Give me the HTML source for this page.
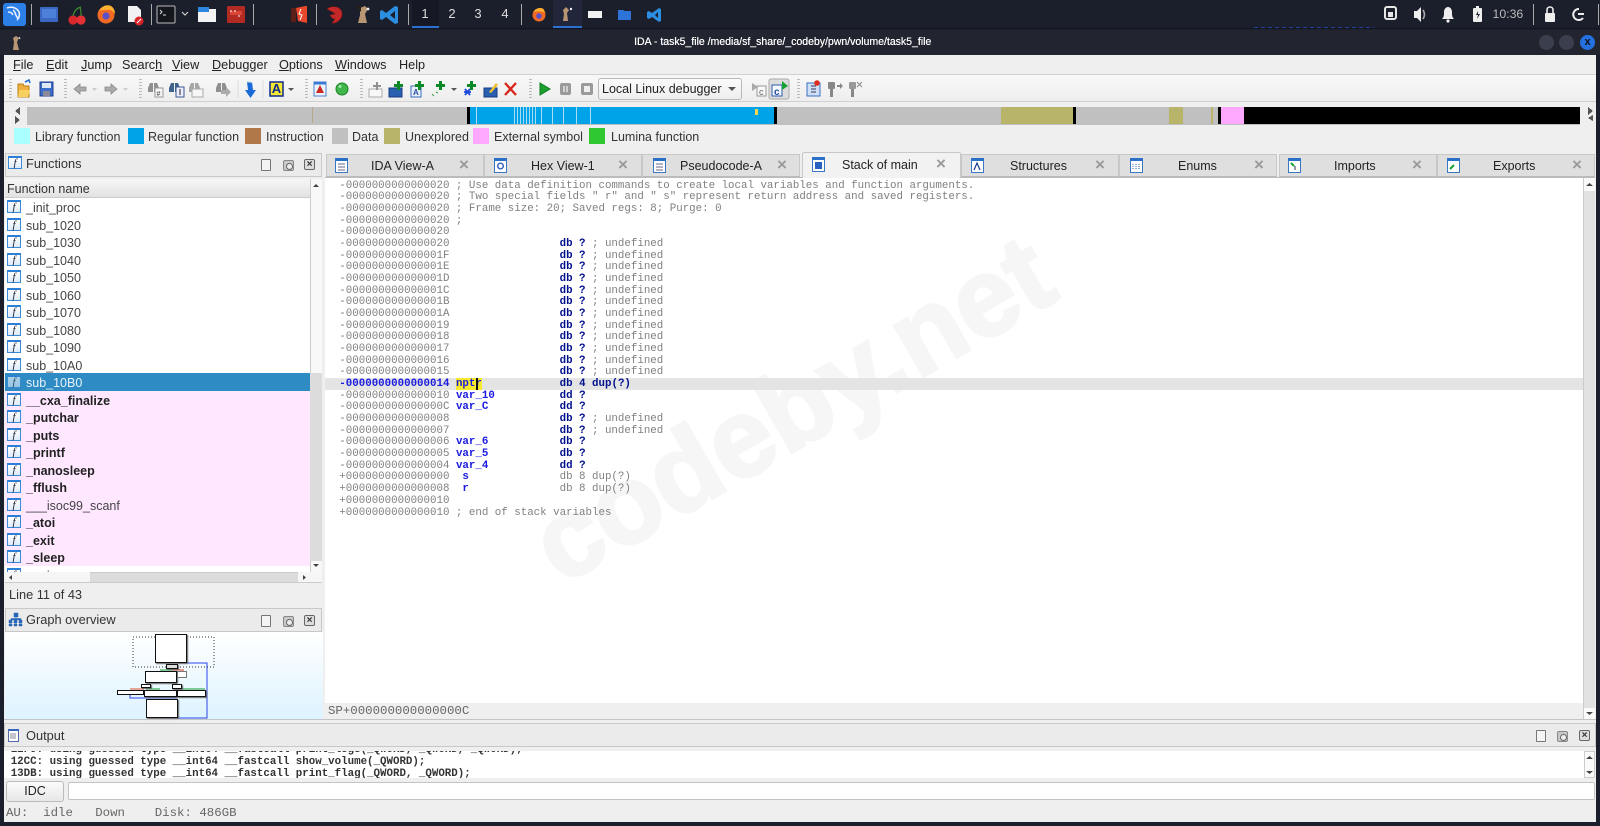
<!DOCTYPE html>
<html><head><meta charset="utf-8"><title>IDA</title>
<style>
html,body{margin:0;padding:0;width:1600px;height:826px;overflow:hidden;background:#1b1e2b}
body{position:relative;font-family:"Liberation Sans",sans-serif;font-size:12.5px;color:#333}
.a{position:absolute}
.t{position:absolute;white-space:pre;line-height:16px}
svg{position:absolute;overflow:visible}
.sep{position:absolute;width:1px;background:#aaa;top:4px;height:21px}
.ws{position:absolute;top:6px;color:#ddd;font-size:13px;width:20px;text-align:center}
.sw{position:absolute;top:128px;width:16px;height:16px}
.m{position:absolute;top:57px;font-size:12.7px;line-height:16px;white-space:pre;color:#222}
.m u{text-decoration-thickness:1px}
.l{position:absolute;top:129px;font-size:12.5px;line-height:16px;white-space:pre;color:#333}
.fi{position:absolute;left:2px;top:2px;width:12px;height:10px;border:1px solid #3a8ad8;border-top:2px solid #2c7fd8;background:linear-gradient(#fff,#dcebfa);font:italic 11px/11px "Liberation Serif",serif;color:#223;text-align:center}
.r{position:relative;height:17.5px;line-height:21px;padding-left:21px;white-space:pre;color:#444;font-size:12.5px}
.p{background:#ffe8ff;color:#222;font-weight:bold}
.n{font-weight:normal;color:#444}
.s{background:#2e8bc4;color:#e8f2fa}
.s .fi{opacity:.6}
.tab{position:absolute;top:154px;height:23px;width:158px;background:#dfdfdf;border:1px solid #c8c8c8;border-bottom:1px solid #bbb;box-sizing:border-box}
.tt{position:absolute;top:158px;font-size:12.5px;line-height:16px;color:#222;white-space:pre}
.x{position:absolute;top:157px;font:bold 17px/16px "Liberation Sans",sans-serif;color:#999;width:12px;text-align:center}
pre{margin:0;font-family:"Liberation Mono",monospace;font-size:10.8px;line-height:11.67px;color:#808080}
pre b{color:#00108c}
pre i{font-style:normal;font-weight:bold;color:#1a1ae0}
pre em{font-style:normal;font-weight:bold;color:#1a1ae0}
.stat{position:absolute;font-family:"Liberation Mono",monospace;font-size:12.4px;line-height:15px;color:#666;white-space:pre}
.hb{position:absolute;width:10px;height:12px;border:1px solid #777;border-radius:1px;background:#f4f4f4;box-sizing:border-box}
.hb2{position:absolute;width:11px;height:11px;border:1px solid #888;border-radius:2px;background:#c8c8c8;box-sizing:border-box}
.hb2:after{content:"";position:absolute;left:1.5px;top:1.5px;width:5px;height:5px;border:1px solid #666;border-radius:50%;background:#eee}
.hx{position:absolute;width:11px;height:11px;border:1px solid #666;border-radius:2px;box-sizing:border-box;font:bold 10px/9px "Liberation Sans",sans-serif;text-align:center;color:#333;background:#ddd}
.tb{position:absolute;width:13px;height:15px;background:#fff;border:1px solid #3b78c4;border-top:3px solid #2a70c8;box-sizing:border-box}
.g{position:absolute;background:#fff;border:1px solid #111;box-shadow:1px 1px 1px #666;box-sizing:border-box}
.grip{position:absolute;top:79px;height:20px;width:3px;background:repeating-linear-gradient(#bbb 0 1px,transparent 1px 3px)}
</style></head><body>

<!-- top panel -->
<div class="a" style="left:0;top:0;width:1600px;height:30px;background:#1b1e2b"></div>
<div class="a" style="left:0;top:28px;width:1600px;height:1px;background:#141722"></div>
<div class="a" style="left:1254px;top:27px;width:120px;height:1px;background:repeating-linear-gradient(90deg,#1f3f9a 0 4px,transparent 4px 7px)"></div>
<svg style="left:0;top:0" width="1600" height="30">
 <rect x="3" y="3" width="23" height="23" rx="3" fill="#2b7fe6"/>
 <path d="M7 8c5-2 10 0 12 4 1 3 0 6-2 8m-4-10c3 2 2 6 5 8M8 12c3 0 4 1 5 3" stroke="#e6f0ff" stroke-width="1.6" fill="none"/>
 <rect x="40" y="7" width="18" height="15" rx="1" fill="#3c68c4"/>
 <rect x="42" y="9" width="14" height="9" fill="#4d80d8"/>
 <circle cx="73" cy="20" r="4.6" fill="#d9282b"/><circle cx="81" cy="20" r="4.6" fill="#e23034"/>
 <path d="M73 16c1-5 4-8 8-9M81 16c0-4 0-7-1-9" stroke="#3d8a2e" stroke-width="1.2" fill="none"/>
 <circle cx="106" cy="15" r="8.5" fill="#f06a23"/><circle cx="106" cy="16" r="3.6" fill="#5a50c8"/><path d="M99 11c2-5 8-7 12-5 3 2 4 5 4 8-2-3-5-5-8-4-3 0-6 0-8 1z" fill="#ffb02e"/>
 <path d="M128 6h9l4 4v12h-13z" fill="#f2f2f2"/><circle cx="139" cy="21" r="4.5" fill="#d8262b"/><path d="M137 23l4-4" stroke="#fff"/>
 <rect x="157" y="6" width="18" height="17" rx="1" fill="#15171f" stroke="#bcbcbc"/><path d="M160 10l2 2-2 2" stroke="#ddd" fill="none"/><path d="M163 15h3" stroke="#ddd"/>
 <path d="M182 12l3 3 3-3" stroke="#ccc" fill="none" stroke-width="1.2"/>
 <path d="M198 7h7l2 2h9v13h-18z" fill="#f3f3f3"/><rect x="198" y="7" width="11" height="5" fill="#2f86e0"/>
 <rect x="227" y="6" width="18" height="17" rx="1" fill="#b22a22"/><path d="M230 11h12v4h-12z" fill="#d8463a"/><path d="M231 10v2m4-2v2m4 3v2" stroke="#fff"/>
 <path d="M296 8l9-2 2 0v17l-9-2z" fill="#e8472c"/><path d="M291 8h5v14h-5z" fill="#5b1f18"/><path d="M301 9l-2 5 3 1-2 5" stroke="#fff" fill="none"/>
 <path d="M327 9c5-4 14-3 15 4 1 6-6 11-10 10l3-4c-3 0-4-2-5-4l5-1c-2-2-5-3-8-5z" fill="#c42828" stroke="#751818" stroke-width=".6"/>
 <path d="M360 8l5-2 3 3-3 5 2 9h-9l2-8z" fill="#b89674"/><circle cx="368" cy="9" r="1.4" fill="#eee"/><path d="M357 7l4-2 0 7z" fill="#2a2018"/>
 <path d="M395 6l-9 7-4-3-2 1v8l2 1 4-3 9 7 3-1V7zm0 5v8l-5-4z" fill="#2b8ee0"/>
 <rect x="412" y="0" width="27" height="27" fill="#161825"/><rect x="412" y="26" width="27" height="2" fill="#2b6fd0"/>
 <rect x="553" y="0" width="29" height="27" fill="#22263a"/><rect x="553" y="26" width="29" height="2" fill="#2b6fd0"/>
 <circle cx="539" cy="15" r="6.5" fill="#f06a23"/><circle cx="539" cy="16" r="2.8" fill="#5a50c8"/><path d="M533.500 12c2-4 7-5 10-3l2 4c-3-2-8-2-12-1z" fill="#ffb02e"/>
 <path d="M563 10l3-3 3 3-2 3 1 8h-5l1-7z" fill="#b89674"/><circle cx="571" cy="9" r="1.2" fill="#eee"/>
 <rect x="588" y="11" width="14" height="7" fill="#f2f2f2"/>
 <path d="M618 10h5l2 1h6v9h-13z" fill="#2e74d8"/>
 <path d="M659 8l-7 5-3-2-2 1v6l2 1 3-2 7 5 2-1V9zm-1 4v6l-3-3z" fill="#2b8ee0"/>
 <rect x="1385" y="7" width="11" height="12" rx="2" fill="none" stroke="#e6e6e6" stroke-width="2"/><rect x="1388" y="12" width="5" height="5" fill="#e6e6e6"/>
 <path d="M1414 11h3l4-4v15l-4-4h-3z" fill="#eee"/><path d="M1423 10c2 3 2 6 0 9" stroke="#aaa" stroke-width="1.6" fill="none"/>
 <path d="M1442 19c2-2 2-4 2-7 0-3 2-5 4-5s4 2 4 5c0 3 0 5 2 7z" fill="#eee"/><circle cx="1448" cy="21" r="1.6" fill="#eee"/>
 <rect x="1473" y="8" width="9" height="14" rx="1" fill="#eee"/><rect x="1476" y="6" width="3" height="2" fill="#eee"/><path d="M1478 11l-2 4h2l-1 4 3-5h-2z" fill="#1b1e2b"/>
 <path d="M1547 13v-3c0-4 6-4 6 0v3" stroke="#eee" stroke-width="1.6" fill="none"/><rect x="1545" y="13" width="10" height="9" rx="1" fill="#eee"/>
 <path d="M1579 9a5.5 5.5 0 1 0 4 9" stroke="#eee" stroke-width="2" fill="none"/><path d="M1578 14h6" stroke="#eee" stroke-width="2"/>
</svg>
<div class="sep" style="left:31px"></div><div class="sep" style="left:151px"></div><div class="sep" style="left:253px"></div><div class="sep" style="left:316px"></div><div class="sep" style="left:408px"></div><div class="sep" style="left:521px"></div><div class="sep" style="left:1533px"></div><div class="sep" style="left:1598px"></div>
<div class="ws" style="left:415px">1</div><div class="ws" style="left:442px">2</div><div class="ws" style="left:468px">3</div><div class="ws" style="left:495px">4</div>
<div class="t" style="left:1492.500px;top:6px;color:#bbb;font-size:12.3px">10:36</div>

<!-- window -->
<div class="a" style="left:0;top:30px;width:1600px;height:25px;background:#22252f"></div>
<svg style="left:8px;top:34px" width="16" height="18"><path d="M5 4l3-2 3 2-2 4 2 8H5l1-8z" fill="#b89674"/><path d="M11 3l1 2" stroke="#eee"/></svg>
<div class="t" style="left:634px;top:34px;color:#fff;font-size:11px;transform:scaleX(.955);transform-origin:left top;text-shadow:.2px 0 0 #fff">IDA - task5_file /media/sf_share/_codeby/pwn/volume/task5_file</div>
<div class="a" style="left:1539px;top:35px;width:15px;height:15px;border-radius:50%;background:#3b3f4d"></div>
<div class="a" style="left:1559px;top:35px;width:15px;height:15px;border-radius:50%;background:#3b3f4d"></div>
<div class="a" style="left:1580px;top:35px;width:15px;height:15px;border-radius:50%;background:#2470e0;color:#111;font:bold 11px/15px 'Liberation Sans';text-align:center">x</div>

<div class="a" style="left:4px;top:55px;width:1592px;height:767px;background:#efefef"></div>

<!-- menu -->
<div class="a" style="left:4px;top:74px;width:1592px;height:1px;background:#d2d2d2"></div>
<div class="m" style="left:13px"><u>F</u>ile</div><div class="m" style="left:46px"><u>E</u>dit</div><div class="m" style="left:81px"><u>J</u>ump</div><div class="m" style="left:122px">Searc<u>h</u></div><div class="m" style="left:172px"><u>V</u>iew</div><div class="m" style="left:212px"><u>D</u>ebugger</div><div class="m" style="left:279px"><u>O</u>ptions</div><div class="m" style="left:335px"><u>W</u>indows</div><div class="m" style="left:399px">Help</div>

<!-- toolbar -->
<div class="a" style="left:4px;top:75px;width:1592px;height:27px;background:linear-gradient(#f8f8f8,#eeeeee);border-bottom:1px solid #d0d0d0;box-sizing:border-box"></div>
<div class="grip" style="left:9px"></div><div class="grip" style="left:64px"></div><div class="grip" style="left:139px"></div><div class="grip" style="left:305px"></div><div class="grip" style="left:360px"></div><div class="grip" style="left:529px"></div><div class="grip" style="left:797px"></div>
<svg style="left:0;top:0" width="900" height="105">
 <path d="M18 84h5l1 2h5v11H18z" fill="#f0b040" stroke="#b8801c"/><path d="M19 90h11l-2 7H18z" fill="#f8d060"/><path d="M25 82l4-2 1 3" stroke="#2a70c8" stroke-width="1.6" fill="none"/>
 <rect x="40" y="82" width="13" height="14" fill="#3a6cc8" stroke="#223f90"/><rect x="42" y="83" width="9" height="5" fill="#dfe8f8"/><rect x="43" y="91" width="7" height="5" fill="#889"/>
 <path d="M74 89l6-5v3h6v4h-6v3z" fill="#aaa" stroke="#888" stroke-width=".8"/><path d="M92 88l2.500 3 2.500-3z" fill="#ccc"/>
 <path d="M117 89l-6-5v3h-6v4h6v3z" fill="#aaa" stroke="#888" stroke-width=".8"/><path d="M123 88l2.500 3 2.500-3z" fill="#ccc"/>
 <path d="M150 83h3v9h-5v-4zM154 83h3l2 5v4h-5z" fill="#8f8f8f"/><rect x="155" y="88" width="8" height="9" fill="#f6f6f6" stroke="#999"/><text x="156.500" y="96" font-size="7" fill="#444" font-family="Liberation Sans">#</text>
 <path d="M171 83h3v9h-5v-4zM175 83h3l2 5v4h-5z" fill="#3f628c"/><rect x="176" y="87" width="8" height="10" fill="#eef" stroke="#3a5a90"/><path d="M180 89v6" stroke="#223"/>
 <path d="M191 83h3v9h-5v-4zM195 83h3l2 5v4h-5z" fill="#a6a6a6"/><rect x="192" y="89" width="11" height="8" fill="#f6f6f6" stroke="#aaa"/>
 <path d="M218 83h3v9h-5v-4zM222 83h3l2 5v3h-5z" fill="#8f8f8f"/><path d="M221 90h5v-3l5 5-5 5v-3h-5z" fill="#aaa"/>
 <path d="M238 80v18" stroke="#ddd"/>
 <path d="M247 82h5l1 8h3l-5.500 8-5.500-8h3z" fill="#1b6ad8"/><path d="M247 82c2 0 4 0 5 1" stroke="#9cd" fill="none"/>
 <path d="M263 80v18" stroke="#ddd"/>
 <rect x="270" y="82" width="13" height="14" fill="#f6e634" stroke="#102a8c" stroke-width="1.500"/>
 <path d="M288 88l3 3 3-3z" fill="#555"/>
 <rect x="314" y="82" width="12" height="14" fill="#eef4fc" stroke="#4a80c8"/><rect x="314" y="82" width="12" height="2.500" fill="#3a7ad8"/><path d="M320 85l4 8h-8z" fill="#c82820"/>
 <circle cx="342" cy="89" r="6" fill="#3fb54a" stroke="#1c8428"/><circle cx="340" cy="86.500" r="1.500" fill="#a6e8a6"/>
 <rect x="369" y="89" width="13" height="8" fill="#f8f8f8" stroke="#aaa"/><path d="M376 82h2v3h3v2h-3v3h-2v-3h-3v-2h3z" fill="#909090"/>
 <rect x="389" y="88" width="13" height="9" fill="#2a60b0" stroke="#1a3a80"/><path d="M397 81h3v3h3v3h-3v3h-3v-3h-3v-3h3z" fill="#0d8a28"/>
 <rect x="411" y="86" width="10" height="11" fill="#e8f0fa" stroke="#3a6ab8"/><text x="413" y="95" font-size="8" font-weight="bold" fill="#2a50a0" font-family="Liberation Sans">A</text><path d="M418 81h3v3h3v3h-3v3h-3v-3h-3v-3h3z" fill="#0d8a28"/>
 <path d="M432 94l2 2m2-4 2 1" stroke="#3aa04a"/><path d="M439 81h3v3h3v3h-3v3h-3v-3h-3v-3h3z" fill="#0d8a28"/><path d="M451 88l3 3 3-3z" fill="#555"/>
 <path d="M465 89l5 6m0-6l-5 6m-1-3h7" stroke="#1e4adc" stroke-width="1.800"/><path d="M470 81h3v3h3v3h-3v3h-3v-3h-3v-3h3z" fill="#0d8a28"/>
 <rect x="484" y="88" width="13" height="9" fill="#2a60b0" stroke="#1a3a80"/><path d="M489 92l7-9 2 2-7 8z" fill="#f0c030"/>
 <path d="M505 83l11 12m0-12l-11 12" stroke="#d8261c" stroke-width="2.400"/>
 <path d="M540 83l10 6-10 6z" fill="#1da030" stroke="#0c7a1c"/>
 <rect x="560" y="83" width="11" height="12" rx="2" fill="#9a9a9a"/><path d="M564 86v6m3-6v6" stroke="#eee" stroke-width="1.300"/>
 <rect x="581" y="83" width="12" height="12" rx="2" fill="#9a9a9a"/><rect x="584" y="86" width="6" height="6" fill="#eee"/>
 <path d="M752 83l6 4-6 4zM758 85h8" fill="#aaa"/><rect x="757" y="86" width="9" height="10" fill="#f8f8f8" stroke="#999"/><text x="759" y="95" font-size="9" font-family="Liberation Sans" fill="#666">c</text>
 <rect x="769" y="79" width="20" height="20" rx="2" fill="#ddd" stroke="#aaa"/><rect x="772" y="85" width="10" height="11" fill="#f4f8ff" stroke="#2a5aa8"/><text x="774" y="95" font-size="10" font-weight="bold" font-family="Liberation Sans" fill="#224a9a">c</text><path d="M782 81l6 5-6 4z" fill="#18a030"/>
 <rect x="807" y="83" width="13" height="13" fill="#cfe0f6" stroke="#3a70c0"/><path d="M811 86h5m-5 3h5m-5 3h5" stroke="#335"/><circle cx="817" cy="83" r="2.800" fill="#e02a20"/>
 <rect x="828" y="82" width="7" height="7" rx="1" fill="#888"/><rect x="830" y="89" width="3" height="8" fill="#888"/><path d="M837 85h3v-2l3 3-3 3v-2h-3z" fill="#888"/>
 <rect x="849" y="82" width="7" height="7" rx="1" fill="#999"/><rect x="851" y="89" width="3" height="8" fill="#888"/><path d="M857 82l5 5m0-5l-5 5" stroke="#888"/>
</svg>
<div class="a" style="left:598px;top:78px;width:144px;height:22px;background:linear-gradient(#fbfbfb,#eee);border:1px solid #b8b8b8;border-radius:3px;box-sizing:border-box"></div>
<div class="t" style="left:602px;top:81px;font-size:12.5px;color:#222">Local Linux debugger</div>
<svg style="left:728px;top:87px" width="8" height="5"><path d="M0 0h8l-4 4z" fill="#555"/></svg>
<div class="a" style="left:270px;top:81px;width:13px;text-align:center;font:bold 13px/16px 'Liberation Sans';color:#102a8c">A</div>

<!-- nav band -->
<div class="a" style="left:4px;top:102px;width:1592px;height:48px;background:#efefef"></div>
<svg style="left:0;top:102px" width="1600" height="24" shape-rendering="crispEdges">
 <path d="M15 9l5-4v8zM15 14l5 4-5 4z" fill="#555"/>
 <rect x="27" y="5" width="1553" height="18" fill="#c0c0c0"/>
 <rect x="312" y="5" width="1" height="16" fill="#b8a890"/>
 <rect x="467" y="5" width="3" height="17" fill="#000"/>
 <rect x="470" y="5" width="304" height="17" fill="#00a2e8"/>
 <g fill="#a8dcf4"><rect x="476" y="5" width="1" height="17"/><rect x="514" y="5" width="1" height="17"/><rect x="517" y="5" width="1" height="17"/><rect x="520" y="5" width="1" height="17"/><rect x="523" y="5" width="1" height="17"/><rect x="526" y="5" width="1" height="17"/><rect x="529" y="5" width="1" height="17"/><rect x="532" y="5" width="1" height="17"/><rect x="535" y="5" width="1" height="17"/><rect x="541" y="5" width="1" height="17"/><rect x="552" y="5" width="1" height="17"/><rect x="563" y="5" width="1" height="17"/><rect x="576" y="5" width="1" height="17"/><rect x="590" y="5" width="1" height="17"/></g>
 <rect x="755" y="7" width="3" height="6" fill="#f4d64e"/>
 <rect x="774" y="5" width="3" height="17" fill="#000"/>
 <rect x="1001" y="5" width="72" height="17" fill="#b8b46a"/>
 <rect x="1073" y="5" width="3" height="17" fill="#000"/>
 <rect x="1169" y="5" width="14" height="17" fill="#b8b46a"/>
 <rect x="1211" y="5" width="2" height="17" fill="#b8b46a"/>
 <rect x="1218" y="5" width="3" height="17" fill="#000"/>
 <rect x="1221" y="5" width="23" height="17" fill="#ffa8ff"/>
 <rect x="1244" y="5" width="336" height="17" fill="#000"/>
 <path d="M1588 5l5 4-5 4zM1593 13v6l-5-3z" fill="#555"/>
</svg>

<!-- legend -->
<div class="sw" style="left:14px;background:#aaffff"></div><div class="l" style="left:35px">Library function</div>
<div class="sw" style="left:128px;background:#00a2e8"></div><div class="l" style="left:148px">Regular function</div>
<div class="sw" style="left:245px;background:#b07848"></div><div class="l" style="left:266px">Instruction</div>
<div class="sw" style="left:332px;background:#c0c0c0"></div><div class="l" style="left:352px">Data</div>
<div class="sw" style="left:384px;background:#b8b46a"></div><div class="l" style="left:405px">Unexplored</div>
<div class="sw" style="left:473px;background:#ffa8ff"></div><div class="l" style="left:494px">External symbol</div>
<div class="sw" style="left:589px;background:#30c830"></div><div class="l" style="left:611px">Lumina function</div>

<!-- functions panel -->
<div class="a" style="left:5px;top:153px;width:317px;height:24px;background:#ebebeb;border:1px solid #c8c8c8;box-sizing:border-box"></div>
<div class="a" style="left:5px;top:155px;width:16px;height:16px"><span class="fi" style="left:3px;top:1px">f</span></div>
<div class="t" style="left:26px;top:156px;font-size:12.8px;color:#333">Functions</div>
<div class="hb" style="left:261px;top:159px"></div><div class="hb2" style="left:283px;top:160px"></div><div class="hx" style="left:304px;top:159px">×</div>

<div class="a" style="left:5px;top:179px;width:305px;height:19px;background:linear-gradient(#f6f6f6,#e2e2e2);border-bottom:1px solid #ccc;box-sizing:border-box"></div>
<div class="t" style="left:7px;top:181px;font-size:12.5px;color:#333">Function name</div>
<div class="a" style="left:5px;top:198px;width:305px;height:374px;background:#fff;overflow:hidden">
<div class="r"><span class="fi">f</span>_init_proc</div>
<div class="r"><span class="fi">f</span>sub_1020</div>
<div class="r"><span class="fi">f</span>sub_1030</div>
<div class="r"><span class="fi">f</span>sub_1040</div>
<div class="r"><span class="fi">f</span>sub_1050</div>
<div class="r"><span class="fi">f</span>sub_1060</div>
<div class="r"><span class="fi">f</span>sub_1070</div>
<div class="r"><span class="fi">f</span>sub_1080</div>
<div class="r"><span class="fi">f</span>sub_1090</div>
<div class="r"><span class="fi">f</span>sub_10A0</div>
<div class="r s"><span class="fi">f</span>sub_10B0</div>
<div class="r p"><span class="fi">f</span>__cxa_finalize</div>
<div class="r p"><span class="fi">f</span>_putchar</div>
<div class="r p"><span class="fi">f</span>_puts</div>
<div class="r p"><span class="fi">f</span>_printf</div>
<div class="r p"><span class="fi">f</span>_nanosleep</div>
<div class="r p"><span class="fi">f</span>_fflush</div>
<div class="r p n"><span class="fi">f</span>___isoc99_scanf</div>
<div class="r p"><span class="fi">f</span>_atoi</div>
<div class="r p"><span class="fi">f</span>_exit</div>
<div class="r p"><span class="fi">f</span>_sleep</div>
<div class="r"><span class="fi">f</span>.main</div>
</div>
<!-- vert scrollbar -->
<div class="a" style="left:310px;top:179px;width:12px;height:393px;background:#f8f8f8;border-left:1px solid #ccc;box-sizing:border-box"></div>
<div class="a" style="left:310px;top:373px;width:12px;height:188px;background:#dcdcdc"></div>
<svg style="left:310px;top:179px" width="12" height="393"><path d="M3 8l3-3 3 3z" fill="#444"/><path d="M3 385l3 3 3-3z" fill="#444"/></svg>
<!-- hor scrollbar -->
<div class="a" style="left:5px;top:572px;width:317px;height:11px;background:#dcdcdc;border:1px solid #ccc;box-sizing:border-box"></div>
<div class="a" style="left:5px;top:572px;width:85px;height:11px;background:#f6f6f6;border-bottom:1px solid #ccc;box-sizing:border-box"></div>
<div class="a" style="left:298px;top:572px;width:24px;height:11px;background:#f6f6f6;border-bottom:1px solid #ccc;box-sizing:border-box"></div>
<svg style="left:5px;top:572px" width="310" height="11"><path d="M7 3v5l-3-2.500z" fill="#444"/><path d="M298 3v5l3-2.500z" fill="#444"/></svg>
<div class="t" style="left:9px;top:587px;font-size:12.8px;color:#333">Line 11 of 43</div>

<!-- graph overview -->
<div class="a" style="left:5px;top:608px;width:317px;height:24px;background:#ebebeb;border:1px solid #c8c8c8;box-sizing:border-box"></div>
<svg style="left:8px;top:612px" width="16" height="15"><path d="M6 1h4v4H6zM1 8h3v3H1zM6 8h3v3H6zM11 8h3v3h-3zM1 12h3v2H1zM6 12h3v2H6zM11 12h3v2h-3zM8 5v3M3 8V6.500h10V8" fill="#2a66b8" stroke="#2a66b8" stroke-width=".5"/></svg>
<div class="t" style="left:26px;top:612px;font-size:12.8px;color:#333">Graph overview</div>
<div class="hb" style="left:261px;top:615px"></div><div class="hb2" style="left:283px;top:616px"></div><div class="hx" style="left:304px;top:615px">×</div>
<div class="a" style="left:5px;top:632px;width:318px;height:88px;background:linear-gradient(#ffffff,#ddf3ff);overflow:hidden"></div>
<svg style="left:0;top:0" width="330" height="720">
 <path d="M178 663h29v55h-45M130 690v8h47" fill="none" stroke="#2a45e8" stroke-width="1"/>
 <rect x="133" y="637" width="81" height="30" fill="none" stroke="#333" stroke-dasharray="1 2"/>
 <path d="M160 670h24" stroke="#109a30"/><path d="M172 670h12" stroke="#e04020"/>
 <path d="M130 689h14" stroke="#e05030"/><path d="M146 689h14" stroke="#109a30"/><path d="M178 689h27" stroke="#109a30"/>
</svg>
<div class="g" style="left:155px;top:634px;width:32px;height:29px"></div>
<div class="g" style="left:166px;top:664px;width:12px;height:5px;background:#ddd"></div>
<div class="g" style="left:145px;top:671px;width:32px;height:12px"></div>
<div class="g" style="left:177px;top:671px;width:10px;height:7px;border-color:#777;box-shadow:none"></div>
<div class="g" style="left:141px;top:684px;width:10px;height:4px"></div>
<div class="g" style="left:172px;top:684px;width:10px;height:5px"></div>
<div class="g" style="left:117px;top:690px;width:27px;height:5px;box-shadow:none"></div>
<div class="g" style="left:144px;top:690px;width:33px;height:7px"></div>
<div class="g" style="left:177px;top:690px;width:29px;height:7px"></div>
<div class="g" style="left:146px;top:699px;width:32px;height:19px"></div>

<!-- tabs -->
<div class="a" style="left:325px;top:177px;width:1270px;height:1px;background:#bbb"></div>
<div class="tab" style="left:326px"></div><div class="tab" style="left:484px"></div><div class="tab" style="left:642px"></div>
<div class="tab" style="left:961px"></div><div class="tab" style="left:1119px"></div><div class="tab" style="left:1279px"></div><div class="tab" style="left:1437px"></div>
<div class="tab" style="left:802px;top:152px;height:26px;width:159px;background:#f2f2f2;border-bottom:none;border-radius:2px 2px 0 0"></div>
<div class="tb" style="left:335px;top:158px"></div><div class="tb" style="left:494px;top:158px"></div><div class="tb" style="left:653px;top:158px"></div><div class="tb" style="left:812px;top:157px"></div><div class="tb" style="left:971px;top:158px"></div><div class="tb" style="left:1130px;top:158px"></div><div class="tb" style="left:1288px;top:158px"></div><div class="tb" style="left:1447px;top:158px"></div>
<svg style="left:0;top:1px" width="1600" height="180">
 <path d="M338 163h7m-7 3h7m-7 3h7" stroke="#668"/><circle cx="500.500" cy="165" r="2.800" fill="none" stroke="#2a60c0" stroke-width="1.400"/>
 <path d="M656 163h7m-7 3h7m-7 3h7" stroke="#668"/><rect x="815" y="161" width="7" height="7" fill="#2a60c0"/>
 <path d="M974 169l3-7 3 7" stroke="#1a3a90" fill="none" stroke-width="1.200"/><path d="M1133 163v6m3-6v6m3-6v6" stroke="#2a60a8" stroke-dasharray="1 1"/>
 <path d="M1291 162l3 3" stroke="#18a030" stroke-width="2"/><path d="M1295 165v4" stroke="#235"/><path d="M1450 168l4-4" stroke="#18a030" stroke-width="2"/>
</svg>
<div class="tt" style="left:371px">IDA View-A</div><div class="x" style="left:458px">×</div>
<div class="tt" style="left:531px">Hex View-1</div><div class="x" style="left:617px">×</div>
<div class="tt" style="left:680px">Pseudocode-A</div><div class="x" style="left:776px">×</div>
<div class="tt" style="left:842px;top:157px">Stack of main</div><div class="x" style="left:935px;top:156px">×</div>
<div class="tt" style="left:1010px">Structures</div><div class="x" style="left:1094px">×</div>
<div class="tt" style="left:1178px">Enums</div><div class="x" style="left:1253px">×</div>
<div class="tt" style="left:1334px">Imports</div><div class="x" style="left:1411px">×</div>
<div class="tt" style="left:1493px">Exports</div><div class="x" style="left:1571px">×</div>

<!-- code view -->
<div class="a" style="left:325px;top:178px;width:1258px;height:525px;background:#fff;overflow:hidden"></div>
<svg style="left:0;top:0" width="1600" height="826"><text x="0" y="0" transform="translate(561,586) rotate(-30)" font-family="Liberation Sans" font-weight="bold" font-size="111" fill="#f6f6f6" stroke="#f6f6f6" stroke-width="3">codeby.net</text></svg>
<div class="a" style="left:325px;top:378px;width:1258px;height:11.500px;background:#e4e4e4"></div>
<div class="a" style="left:456px;top:378px;width:26px;height:11.500px;background:#f7e92e"></div>
<pre class="a" style="left:339.300px;top:180.700px">-0000000000000020 ; Use data definition commands to create local variables and function arguments.
-0000000000000020 ; Two special fields " r" and " s" represent return address and saved registers.
-0000000000000020 ; Frame size: 20; Saved regs: 8; Purge: 0
-0000000000000020 ;
-0000000000000020
-0000000000000020                 <b>db ?</b> ; undefined
-000000000000001F                 <b>db ?</b> ; undefined
-000000000000001E                 <b>db ?</b> ; undefined
-000000000000001D                 <b>db ?</b> ; undefined
-000000000000001C                 <b>db ?</b> ; undefined
-000000000000001B                 <b>db ?</b> ; undefined
-000000000000001A                 <b>db ?</b> ; undefined
-0000000000000019                 <b>db ?</b> ; undefined
-0000000000000018                 <b>db ?</b> ; undefined
-0000000000000017                 <b>db ?</b> ; undefined
-0000000000000016                 <b>db ?</b> ; undefined
-0000000000000015                 <b>db ?</b> ; undefined
<em>-0000000000000014</em> <i>nptr</i>            <b>db 4 dup(?)</b>
-0000000000000010 <i>var_10</i>          <b>dd ?</b>
-000000000000000C <i>var_C</i>           <b>dd ?</b>
-0000000000000008                 <b>db ?</b> ; undefined
-0000000000000007                 <b>db ?</b> ; undefined
-0000000000000006 <i>var_6</i>           <b>db ?</b>
-0000000000000005 <i>var_5</i>           <b>db ?</b>
-0000000000000004 <i>var_4</i>           <b>dd ?</b>
+0000000000000000  <i>s</i>              db 8 dup(?)
+0000000000000008  <i>r</i>              db 8 dup(?)
+0000000000000010
+0000000000000010 ; end of stack variables</pre>
<div class="a" style="left:476px;top:378px;width:2px;height:11.500px;background:#111"></div>

<!-- code scrollbar -->
<div class="a" style="left:1583px;top:178px;width:12px;height:541px;background:#e2e2e2;border-left:1px solid #ccc;box-sizing:border-box"></div>
<div class="a" style="left:1584px;top:178px;width:11px;height:13px;background:#fafafa"></div>
<div class="a" style="left:1584px;top:708px;width:11px;height:11px;background:#fafafa"></div>
<svg style="left:1584px;top:178px" width="11" height="541"><path d="M2 8l3.500-3 3.500 3z" fill="#444"/><path d="M2 534l3.500 3 3.500-3z" fill="#444"/></svg>
<div class="a" style="left:325px;top:703px;width:1258px;height:16px;background:#efefef"></div>
<div class="stat" style="left:328px;top:704px">SP+000000000000000C</div>
<div class="a" style="left:4px;top:719px;width:1592px;height:1px;background:#c4c4c4"></div>

<!-- output -->
<div class="a" style="left:4px;top:723px;width:1592px;height:24px;background:#ebebeb;border:1px solid #c8c8c8;box-sizing:border-box"></div>
<div class="a" style="left:8px;top:729px;width:11px;height:13px;background:#fff;border:1px solid #56a;border-top:2px solid #36b;box-sizing:border-box"></div>
<svg style="left:10px;top:733px" width="8" height="8"><path d="M0 1h6M0 3h6M0 5h6" stroke="#889"/></svg>
<div class="t" style="left:26px;top:728px;font-size:12.800px;color:#333">Output</div>
<div class="hb" style="left:1536px;top:730px"></div><div class="hb2" style="left:1557px;top:731px"></div><div class="hx" style="left:1579px;top:730px">×</div>
<div class="a" style="left:4px;top:751px;width:1580px;height:27px;background:#fff;overflow:hidden">
<pre style="position:absolute;left:6.700px;top:-7.500px;font-weight:bold;color:#333;font-size:10.800px;line-height:12px">12F9: using guessed type __int64 __fastcall print_logs(_QWORD, _QWORD, _QWORD);
12CC: using guessed type __int64 __fastcall show_volume(_QWORD);
13DB: using guessed type __int64 __fastcall print_flag(_QWORD, _QWORD);</pre>
</div>
<div class="a" style="left:1584px;top:751px;width:11px;height:27px;background:#fafafa;border:1px solid #ccc;box-sizing:border-box"></div>
<svg style="left:1584px;top:751px" width="11" height="27"><path d="M2 8l3.500-3 3.500 3z" fill="#444"/><path d="M2 20l3.500 3 3.500-3z" fill="#444"/></svg>
<div class="a" style="left:6px;top:781px;width:58px;height:21px;background:linear-gradient(#fbfbfb,#e8e8e8);border:1px solid #bbb;border-radius:3px;box-sizing:border-box;text-align:center;line-height:19px;font-size:12.500px;color:#222">IDC</div>
<div class="a" style="left:68px;top:782px;width:1527px;height:18px;background:#fff;border:1px solid #c4c4c4;border-radius:2px;box-sizing:border-box"></div>
<div class="stat" style="left:6px;top:806px">AU:  idle   Down    Disk: 486GB</div>
</body></html>
